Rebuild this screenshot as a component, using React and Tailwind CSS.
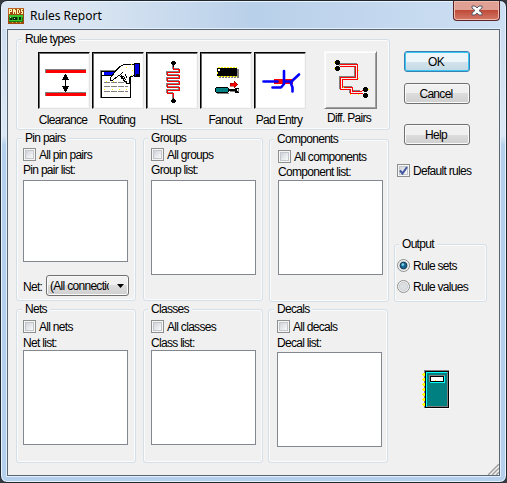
const CHAR = "whitespace-nowrap tracking-[-0.7px]";

function Group({ title, className, titleClass = "ml-[5px]", bodyClass = "", children }) {
  return (
    <section className={`box-border rounded-[3px] border border-[#d5dfe8] shadow-[inset_0_0_0_1px_#fafbfc] ${className}`}>
      <h2 className={`-mt-2 h-3.5 w-fit bg-[#f0f0f0] px-[3px] leading-[14px] ${CHAR} ${titleClass}`}>{title}</h2>
      <div className={`flow-root ${bodyClass}`}>{children}</div>
    </section>
  );
}

function Check({ label, checked, className = "" }) {
  return (
    <label className={`flex h-[13px] items-center gap-[3px] ${className}`}>
      <span className="flex size-[13px] shrink-0 items-center justify-center border border-[#8e8f8f] bg-[#f6f6f6]">
        <span className="flex size-[9px] items-center justify-center border border-[#c3c7cc] bg-linear-to-br from-[#cfd4da] to-[#fafafa]">
          {checked && (
            <svg className="size-[9px] shrink-0" viewBox="0 0 9 9" fill="none" stroke="#4257a0" strokeWidth="2">
              <path d="M1 4.5L3.5 7.5L8 1" />
            </svg>
          )}
        </span>
      </span>
      <span className={`mt-0.5 leading-[13px] ${CHAR}`}>{label}</span>
    </label>
  );
}

function Radio({ label, checked }) {
  return (
    <label className="flex h-[13px] items-center gap-[3px]">
      <svg className="size-[13px] shrink-0" viewBox="0 0 13 13">
        <circle cx="6.5" cy="6.5" r="6" fill="#f4f4f4" stroke="#8e8f8f" />
        <circle cx="6.5" cy="6.5" r="4.2" fill="#dcdfe2" stroke="#c2c5c9" strokeWidth=".7" />
        {checked && <circle cx="6.5" cy="6.5" r="3.3" fill="#176a96" stroke="#12334d" />}
        {checked && <circle cx="5.8" cy="5.6" r="1.3" fill="#7fd0ee" />}
      </svg>
      <span className={`mt-0.5 leading-[13px] ${CHAR}`}>{label}</span>
    </label>
  );
}

function PickGroup({ title, all, list, className, titleClass, bodyClass, checkClass, labelClass, boxClass, children }) {
  return (
    <Group title={title} className={className} titleClass={titleClass} bodyClass={bodyClass}>
      <Check label={all} className={checkClass} />
      <div className={`h-3.5 leading-[14px] ${CHAR} ${labelClass}`}>{list}</div>
      <div className={`w-[105px] border border-[#828790] bg-white ${boxClass}`} />
      {children}
    </Group>
  );
}

function RuleType({ label, children }) {
  return (
    <div className="flex w-[52px] flex-col items-center">
      <button className="h-[57px] w-[52px] border border-t-black border-r-[#e3e3e3] border-b-[#e3e3e3] border-l-black bg-white shadow-[inset_1px_1px_0_#696969,inset_-1px_-1px_0_#f8f8f8]">
        {children}
      </button>
      <span className={`mt-1 mr-0.5 h-3.5 leading-[14px] ${CHAR}`}>{label}</span>
    </div>
  );
}

function PushButton({ label, primary, className = "" }) {
  return (
    <button
      className={`h-[21px] w-[66px] rounded-[3px] border pt-0.5 pr-0.5 leading-[17px] ${CHAR} ${
        primary
          ? "border-[#3c7fb1] bg-linear-to-b from-[#eef5f9] from-50% via-[#d3e4ed] via-50% to-[#c3d9e5] shadow-[inset_0_0_0_1px_#35c8f5]"
          : "border-[#707070] bg-linear-to-b from-[#f0f0f0] from-50% via-[#dddddd] via-50% to-[#cfcfcf] shadow-[inset_0_0_0_1px_#fafafa]"
      } ${className}`}
    >
      {label}
    </button>
  );
}

const ICON = "block h-[55px] w-[50px]";

function ClearanceIcon() {
  return (
    <svg className={ICON} viewBox="39 53 50 55" shapeRendering="crispEdges">
      <path fill="#808080" d="M45 69h41v4h-41zM45 92h41v4h-41z" />
      <path fill="#f00" d="M46 70h40v3h-40zM46 93h40v3h-40z" />
      <path d="M65 74h1v18h-1zM64 75h3v2h-3zM63 77h5v2h-5zM62 79h7v1h-7zM62 86h7v1h-7zM63 87h5v2h-5zM64 89h3v2h-3z" />
    </svg>
  );
}

function RoutingIcon() {
  return (
    <svg className={ICON} viewBox="93 53 50 55" shapeRendering="crispEdges">
      <path fill="#808080" d="M100 70h30v1h-30zM100 70h1v28h-1z" />
      <path fill="#fff" stroke="#000" d="M101.500 71.500h29v26h-29z" />
      <path fill="#00f" d="M104 72h15v3h-15z" />
      <path d="M102 75h15v1h-15z" />
      <path stroke="#808080" strokeDasharray="6 1" d="M104 82.500h24M104 86.500h24M104 91.500h24" />
      <path fill="#ff0" d="M106 81h1v1h-1zM113 81h1v1h-1zM104 89h1v1h-1zM112 89h1v1h-1zM119 89h1v1h-1zM126 89h1v1h-1zM129 81h1v1h-1z" />
      <path fill="#fff" stroke="#000" d="M134 64.500h-10l-4 2l-4 4l-6 8v2h2l7-5l2 1v2h2v2l3 1l1 2h2v-6l5-2z" />
      <path fill="none" stroke="#000" d="M119 76l4-4M122.500 78l-1-3M125.500 80l-2-4M127 78l-2-4" />
      <path d="M134 63h6v14h-6z" />
      <path fill="#0000e0" d="M135 64h4v10h-3v2h-1z" />
      <path fill="#ff0" d="M131 64h1v1h-1zM126 67h1v1h-1zM132 70h1v1h-1zM131 75h1v1h-1z" />
    </svg>
  );
}

function HslIcon() {
  const coil = "M173.500 63V69.500H179.500V72.500H167.500V75.500H179.500V78.500H167.500V81.500H179.500V84.500H167.500V87.500H179.500V90.500H167.500V93.500H173.500V100";
  return (
    <svg className={ICON} viewBox="147 53 50 55" shapeRendering="crispEdges" fill="none">
      <path stroke="#808080" d={coil} transform="translate(-1 -1)" />
      <path stroke="#f00" d={coil} />
      <path fill="#808080" d="M172 64h1v5h-1zM172 95h1v5h-1z" />
      <path fill="#000" d="M173 61h1v6h-1zM172 61h3v4h-3zM171 62h5v2h-5zM173 98h1v5h-1zM172 99h3v4h-3zM171 100h5v2h-5z" />
    </svg>
  );
}

function FanoutIcon() {
  return (
    <svg className={ICON} viewBox="201 53 50 55" shapeRendering="crispEdges" fill="none">
      <path fill="#808080" d="M219 69h20v9h-20z" />
      <path stroke="#f8f8f8" strokeDasharray="1 2" d="M221 77.500h17" />
      <path stroke="#ff0" strokeDasharray="2 1" d="M218 67.500h19M218 76.500h19" />
      <path fill="#000" d="M217 68h20v8h-20z" />
      <path fill="#fff" d="M218 69h2v2h-2z" />
      <path fill="#ff0" d="M217 72h1v2h-1z" />
      <path fill="#f00" stroke="#800000" strokeWidth=".5" d="M230 83h4v-2l4 3.500l-4 3.500v-2h-4z" />
      <path fill="#000" d="M216 87h12v6h-12zM215 88h14v4h-14zM228 89h9v2h-9zM235 88h4v1h-4zM235 91h4v2h-4z" />
      <path fill="#808080" d="M217 93h12v1h-12zM230 91h5v1h-5zM238 89h1v3h-1z" />
      <path fill="#008080" d="M216 88h12v4h-12z" />
    </svg>
  );
}

function PadIcon() {
  return (
    <svg className={ICON} viewBox="255 53 50 55">
      <path fill="#f00" d="M274 79h19v5h-19z" />
      <g fill="none" stroke="#00f" strokeWidth="2.600" strokeLinecap="round" strokeLinejoin="round">
        <path d="M263.500 81.500h14M284 71v13l-3 3.500h-8.500" />
        <path d="M299 74.500l-6.500 6l-1.500 3l1.500 4v4M284 81.500h6" />
      </g>
    </svg>
  );
}

function DiffPairsIcon() {
  const pair = "M340 65.500H356.500V78.500H341.500V88.500H351.500V92.500H361";
  return (
    <svg className="block h-[54px] w-[50px]" viewBox="325 53 50 54" fill="none" shapeRendering="crispEdges">
      <g stroke="#808080" transform="translate(-1 -1)">
        <path strokeWidth="3" d={pair} />
      </g>
      <path stroke="#f00" strokeWidth="3" d={pair} />
      <path stroke="#f0f0f0" d={pair} />
      <path stroke="#f00" d="M337 61.500l4 3M337 69l4-2.500M365 89l-5 3M365 95l-4-2" />
      <path fill="#ff0" d="M334 62h1v1h-1zM334 68h1v1h-1zM358 70h1v1h-1zM358 78h1v1h-1zM343 87h1v1h-1zM350 94h1v1h-1zM358 94h1v1h-1zM368 89h1v1h-1z" />
      <path fill="#000" d="M336 60h3v5h-3zM335 61h5v3h-5zM336 66h3v5h-3zM335 67h5v3h-5zM364 87h3v5h-3zM363 88h5v3h-5zM364 93h3v5h-3zM363 94h5v3h-5z" />
    </svg>
  );
}

function AppIcon() {
  return (
    <svg className="size-4" viewBox="0 0 16 16" shapeRendering="crispEdges">
      <path fill="#a04a10" d="M0 0h16v16H0z" />
      <path fill="#bd6524" d="M0 0h16v1H0zM0 0h1v7H0z" />
      <path fill="#fff4b0" d="M1 1h3v3h-2v2h-1zM2 2v1h1v-1zM5 1h2v1h1v4h-1v-2h-1v2h-1v-4zM9 1h2v1h1v3h-1v1h-2zM10 2v3h1v-3zM13 1h2v1h-1v1h1v3h-2v-1h1v-1h-1z" fillRule="evenodd" />
      <path fill="#1c7a18" d="M1 7h14v7H1z" />
      <path fill="#37c62d" d="M1 7h14v2H1zM1 12h12v1H1zM10 9h1v4h-1zM13 9h1v4h-1z" />
      <path fill="#062c08" d="M5 9h4v3H5zM11 9h2v3h-2zM2 10h2v2H2z" />
      <path fill="#c3ddaa" d="M6 10h1v1H6zM2 9h1v1H2z" />
      <path fill="#e8b820" d="M4 14h1v1H4zM8 14h1v1H8zM12 14h1v1h-1z" />
    </svg>
  );
}

function BookIcon() {
  return (
    <svg className="ml-[28px] block h-[39px] w-[28px]" viewBox="422 370 28 39" shapeRendering="crispEdges">
      <path fill="#fff" d="M426 372h24v37h-24z" />
      <path fill="#808080" d="M424 370h25v38h-25z" />
      <path d="M425 371h24v37h-24z" />
      <path fill="#808080" d="M426 372h22v35h-22z" />
      <path fill="#0ff" d="M426 372h21v1h-21zM426 372h1v35h-1z" />
      <path fill="#008080" d="M427 373h20v33h-20z" />
      <path fill="#808080" d="M429 375h16v1h-16zM429 375h1v7h-1z" />
      <path fill="#0ff" d="M430 382h15v1h-15zM444 376h1v7h-1z" />
      <path fill="#fff" stroke="#000" d="M430.500 376.500h13v5h-13z" />
      <path fill="#ff0" d="M435 380h1v1h-1z" />
      {[374, 379, 384, 389, 394, 399, 404].map((y) => (
        <path key={y} fill="#ff0" d={`M423 ${y - 1}h2v3h-2zM422 ${y}h3v1h-3z`} />
      ))}
    </svg>
  );
}

export default function App() {
  return (
    <div className="h-[483px] w-[507px] overflow-hidden bg-[#343b43] font-['Liberation_Sans',Arial,sans-serif] text-[12px] text-black">
      <main className="flex h-[483px] w-[507px] flex-col rounded-[7px] border border-[#20262d] bg-linear-to-b from-[#c9daee] from-0% via-[#dce8f5] via-28% to-[#b4d0ed] to-30% px-1.5 pb-1.5 shadow-[inset_0_0_0_1px_#e9f3fc]">
        <header className="-mx-[5px] mt-px flex h-[27px] shrink-0 rounded-t-[6px] bg-linear-to-r from-[#dbe6f2] from-15% via-[#b9d0ea] via-50% to-[#cddff3] pl-1.5">
          <div className="flex h-[26px] items-center gap-1.5 pt-px">
            <AppIcon />
            <h1 className="whitespace-nowrap font-['Noto_Sans','Open_Sans',sans-serif] text-[12px] leading-4">Rules Report</h1>
          </div>
          <button className="mr-[5px] -mt-px ml-auto flex h-5 w-[47px] items-center justify-center rounded-b-[4px] border border-t-0 border-[#5b2527] bg-linear-to-b from-[#e0a194] from-45% via-[#bd4634] via-45% to-[#d47868] shadow-[inset_0_0_0_1px_#efb9ad]">
            <svg className="h-[11px] w-3" viewBox="0 0 12 11">
              <path d="M1 1h3l2 2l2-2h3v2l-3 2.500l3 2.500v2h-3l-2-2l-2 2H1V8l3-2.500L1 3z" fill="#fff" stroke="#565867" />
            </svg>
          </button>
        </header>
        <div className="relative flex h-[447px] w-[493px] shrink-0 gap-[5px] border border-[#596673] bg-[#f0f0f0] pt-[9px] pl-2 shadow-[0_0_0_1px_#e3eefa]">
          <div className="flex w-[373px] shrink-0 flex-col">
            <Group title="Rule types" className="h-[91px] w-[374px]">
              <div className="mt-1.5 flex gap-0.5 pl-[21px]">
                <RuleType label="Clearance"><ClearanceIcon /></RuleType>
                <RuleType label="Routing"><RoutingIcon /></RuleType>
                <RuleType label="HSL"><HslIcon /></RuleType>
                <RuleType label="Fanout"><FanoutIcon /></RuleType>
                <RuleType label="Pad Entry"><PadIcon /></RuleType>
                <div className="-mt-px ml-4 flex w-[53px] flex-col items-center">
                  <button className="h-[58px] w-[53px] border border-t-[#f8f8f8] border-r-[#808080] border-b-[#808080] border-l-[#f8f8f8] bg-[#f0f0f0] shadow-[inset_1px_1px_0_#fff,inset_-1px_-1px_0_#a0a0a0]">
                    <DiffPairsIcon />
                  </button>
                  <span className={`mt-0.5 mr-[3px] h-3.5 leading-[14px] ${CHAR}`}>Diff. Pairs</span>
                </div>
              </div>
            </Group>
            <div className="mt-2 flex items-start">
              <PickGroup title="Pin pairs" all="All pin pairs" list="Pin pair list:" className="h-[163px] w-[120px]" bodyClass="pl-1.5" checkClass="mt-[3px]" labelClass="mt-0.5" boxClass="mt-[3px] h-[82px]">
                <div className="mt-[13px] flex h-[21px] items-center">
                  <span className={`mt-0.5 w-[23px] ${CHAR}`}>Net:</span>
                  <button className="flex h-[21px] w-[83px] items-center rounded-[3px] border border-[#707070] bg-linear-to-b from-[#f0f0f0] from-50% via-[#dddddd] via-50% to-[#cfcfcf] pl-[3px] shadow-[inset_0_0_0_1px_#fafafa]">
                    <span className={`mt-0.5 w-[59px] overflow-hidden text-left leading-[17px] ${CHAR}`}>(All connections)</span>
                    <svg className="ml-2 h-1 w-[7px] shrink-0" viewBox="0 0 7 4"><path d="M0 0h7L3.500 4z" /></svg>
                  </button>
                </div>
              </PickGroup>
              <PickGroup title="Groups" all="All groups" list="Group list:" className="ml-[7px] h-[163px] w-[120px]" titleClass="ml-1" bodyClass="pl-[7px]" checkClass="mt-[3px]" labelClass="mt-0.5" boxClass="mt-[3px] h-[95px]" />
              <PickGroup title="Components" all="All components" list="Component list:" className="mt-px ml-1.5 h-[163px] w-[120px]" titleClass="ml-1" bodyClass="pl-2" checkClass="mt-1" labelClass="mt-0.5" boxClass="mt-px h-[95px]" />
            </div>
            <div className="mt-[7px] flex items-start">
              <PickGroup title="Nets" all="All nets" list="Net list:" className="h-[154px] w-[120px]" bodyClass="pl-1.5" checkClass="mt-1" labelClass="mt-[3px]" boxClass="h-[95px]" />
              <PickGroup title="Classes" all="All classes" list="Class list:" className="ml-[7px] h-[154px] w-[120px]" titleClass="ml-1" bodyClass="pl-[7px]" checkClass="mt-1" labelClass="mt-[3px]" boxClass="h-[95px]" />
              <PickGroup title="Decals" all="All decals" list="Decal list:" className="ml-[5px] h-[154px] w-[120px]" bodyClass="pl-2" checkClass="mt-1" labelClass="mt-[3px]" boxClass="mt-0.5 h-[95px]" />
            </div>
          </div>
          <aside className="flex w-[93px] flex-col pt-3">
            <PushButton label="OK" primary className="ml-2.5" />
            <PushButton label="Cancel" className="mt-[11px] ml-2.5" />
            <PushButton label="Help" className="mt-5 ml-2.5" />
            <Check label="Default rules" checked className="mt-[19px] ml-[3px]" />
            <Group title="Output" className="mt-[67px] h-[58px] w-[93px]" titleClass="ml-1" bodyClass="pl-0.5">
              <div className="mt-2 flex flex-col gap-2">
                <Radio label="Rule sets" checked />
                <Radio label="Rule values" />
              </div>
            </Group>
            <div className="mt-[68px]"><BookIcon /></div>
          </aside>
          <svg className="absolute right-0 bottom-0 size-3" viewBox="0 0 12 12" fill="none">
            <path stroke="#fff" d="M0 12L12 0M4 12L12 4M8 12L12 8" />
            <path stroke="#a0a0a0" strokeWidth="1.500" d="M1 12L12 1M5 12L12 5M9 12L12 9" />
          </svg>
        </div>
      </main>
    </div>
  );
}
